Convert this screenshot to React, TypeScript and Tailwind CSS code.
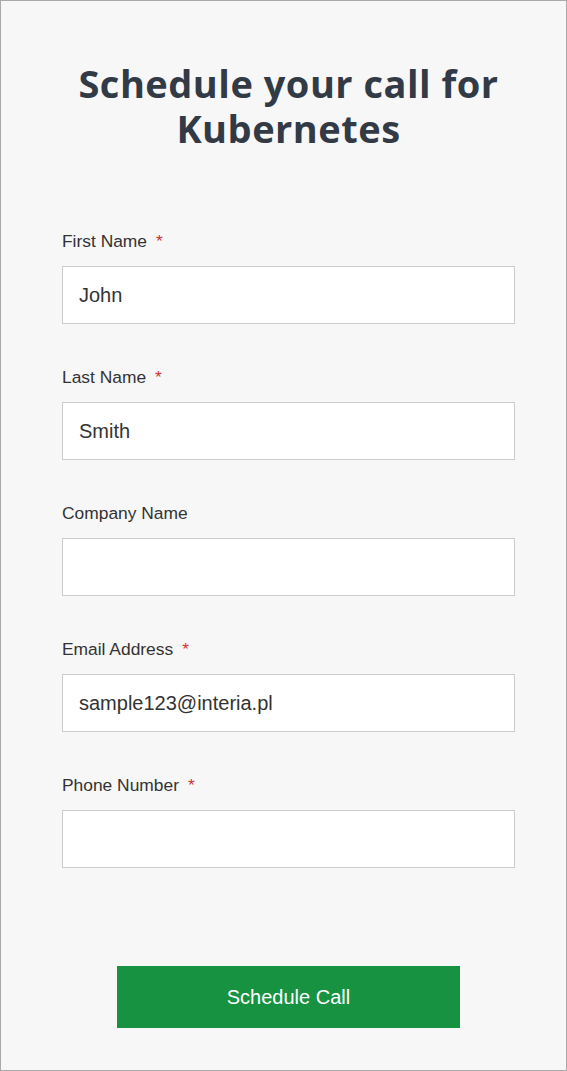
import React from 'react';

interface FieldProps {
  label: string;
  required?: boolean;
  value?: string;
  type?: string;
}

const Field: React.FC<FieldProps> = ({ label, required, value, type = 'text' }) => (
  <div className="mb-[41px] flex flex-col">
    <label className="mb-[13px] flex h-[24px] items-center text-[17.4px] leading-[24px] text-[#333333]">
      {label}
      {required && <span className="ml-[9px] text-[#d0312d]">*</span>}
    </label>
    <input
      type={type}
      defaultValue={value}
      className="h-[58px] w-full border border-[#cccccc] bg-white px-[16px] text-[20px] text-[#333333] outline-none"
    />
  </div>
);

export default function App() {
  return (
    <div
      className="box-border flex min-h-[1071px] w-[567px] flex-col border border-[#a9a9a9] bg-[#f7f7f7] pl-[61px] pr-[51px] pt-[60px]"
      style={{ fontFamily: '"Liberation Sans", Arial, sans-serif' }}
    >
      <h1
        className="mb-[78px] text-center text-[38px] font-bold leading-[45px] tracking-[0.5px] text-[#323a45]"
        style={{ fontFamily: '"Open Sans", sans-serif' }}
      >
        Schedule your call for Kubernetes
      </h1>
      <form className="flex flex-col" onSubmit={(e) => e.preventDefault()}>
        <Field label="First Name" required value="John" />
        <Field label="Last Name" required value="Smith" />
        <Field label="Company Name" />
        <Field label="Email Address" required value="sample123@interia.pl" type="email" />
        <Field label="Phone Number" required type="tel" />
        <div className="mt-[57px] flex justify-center">
          <button
            type="submit"
            className="h-[62px] w-[343px] bg-[#169241] text-[20px] text-white"
          >
            Schedule Call
          </button>
        </div>
      </form>
    </div>
  );
}
